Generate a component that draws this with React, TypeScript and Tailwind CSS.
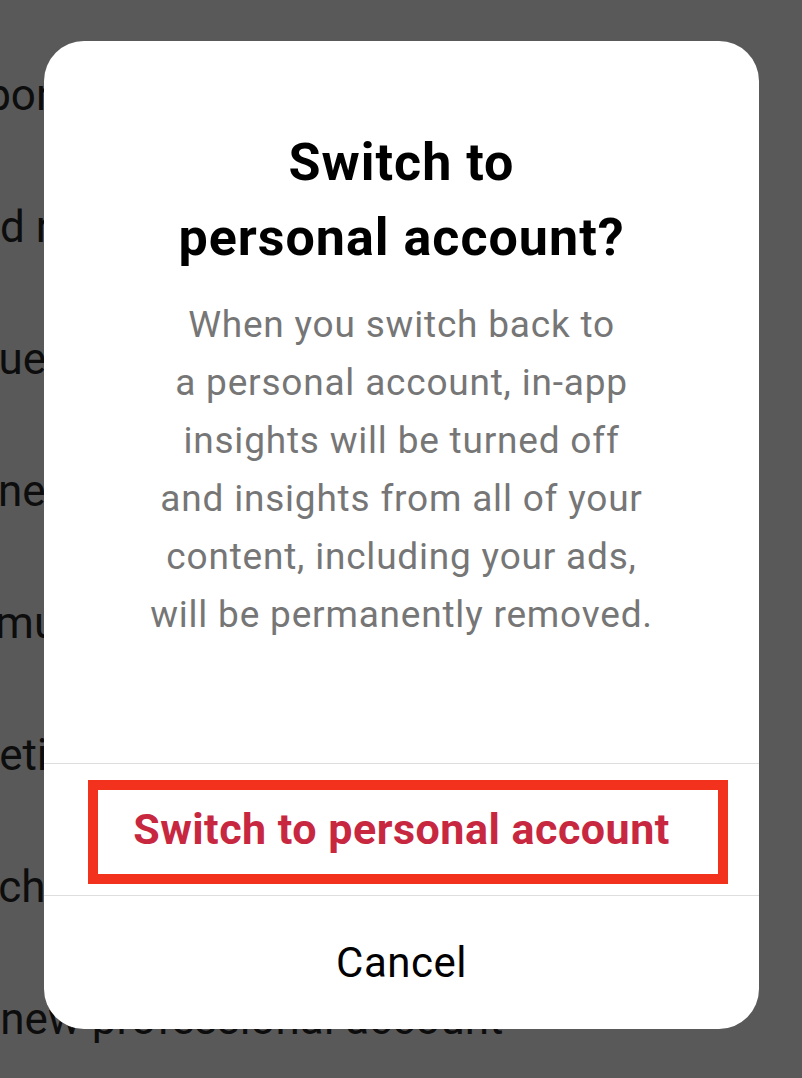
export default function App() {
  const rows = [
    { text: "Sponsored content", cls: "-ml-[40px]" },
    { text: "Saved replies", cls: "-ml-[94px]" },
    { text: "Frequently asked questions", cls: "-ml-[88px]" },
    { text: "Connected accounts", cls: "-ml-[80px]" },
    { text: "Community", cls: "-ml-[97px]" },
    { text: "Marketing tools", cls: "-ml-[100px]" },
    { text: "Switch account type", cls: "-ml-[86px]" },
    { text: "Add new professional account", cls: "-ml-[89px]" },
  ];

  return (
    <div className="relative w-[802px] h-[1078px] overflow-hidden bg-[#595959] font-['Roboto',sans-serif]">
      {/* settings list behind the dialog */}
      <div className="flex flex-col pt-[29px]">
        {rows.map((r) => (
          <div key={r.text} className="h-[132px] leading-[132px] text-[44px] text-[#0d0d0d] whitespace-nowrap">
            <span className={`inline-block ${r.cls}`}>{r.text}</span>
          </div>
        ))}
      </div>

      {/* dialog */}
      <div className="absolute left-[44px] top-[41px] w-[715px] h-[988px] rounded-[40px] bg-white flex flex-col overflow-hidden">
        <div className="flex flex-col items-center text-center pt-[84px] px-10">
          <h2 className="text-[52px] leading-[75px] font-bold text-[#000] tracking-[1px]">
            Switch to
            <br />
            personal account?
          </h2>
          <p className="mt-[21px] text-[37px] leading-[58px] text-[#767676] tracking-[0.8px]">
            When you switch back to
            <br />
            a personal account, in-app
            <br />
            insights will be turned off
            <br />
            and insights from all of your
            <br />
            content, including your ads,
            <br />
            will be permanently removed.
          </p>
        </div>
        <div className="flex-1" />
        <div className="h-px bg-[#dedede]" />
        <div className="relative h-[131px] flex items-center justify-center">
          <span className="text-[43px] font-bold text-[#c8283f] tracking-[0.5px]">Switch to personal account</span>
          <div className="absolute left-[44px] top-[16px] w-[640px] h-[104px] border-[10px] border-[#f2321c]" />
        </div>
        <div className="h-px bg-[#dedede]" />
        <div className="h-[133px] flex items-center justify-center">
          <span className="text-[42px] text-[#000] tracking-[0.5px]">Cancel</span>
        </div>
      </div>
    </div>
  );
}
